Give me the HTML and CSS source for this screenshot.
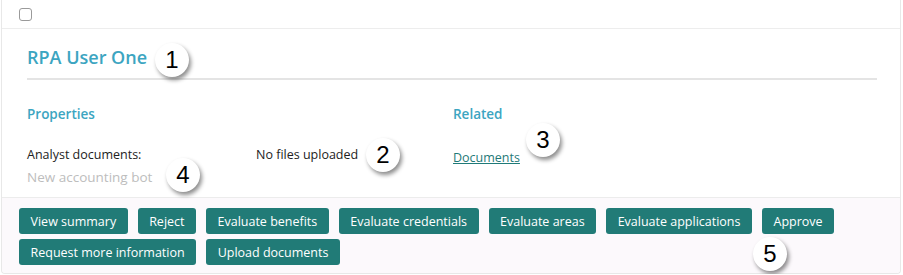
FILE: index.html
```
<!DOCTYPE html>
<html lang="en">
<head>
    <meta charset="UTF-8">
    <title>RPA User One</title>
    <link rel="stylesheet" href="styles.css">
</head>
<body>
    <div class="card">
        <div class="card-top">
            <input type="checkbox" class="check">
        </div>
        <div class="card-body">
            <h2 class="title">RPA User One</h2>
            <div class="sections">
                <div class="props">
                    <h3 class="section-title">Properties</h3>
                    <div class="prop-row">
                        <div class="prop-label">Analyst documents:</div>
                        <div class="prop-value">No files uploaded</div>
                    </div>
                    <div class="prop-sub">New accounting bot</div>
                </div>
                <div class="related">
                    <h3 class="section-title">Related</h3>
                    <a href="#" class="rel-link">Documents</a>
                </div>
            </div>
        </div>
        <div class="card-actions">
            <button class="btn">View summary</button>
            <button class="btn">Reject</button>
            <button class="btn">Evaluate benefits</button>
            <button class="btn">Evaluate credentials</button>
            <button class="btn">Evaluate areas</button>
            <button class="btn">Evaluate applications</button>
            <button class="btn">Approve</button>
            <button class="btn">Request more information</button>
            <button class="btn">Upload documents</button>
        </div>

        <span class="callout c1">1</span>
        <span class="callout c2">2</span>
        <span class="callout c3">3</span>
        <span class="callout c4">4</span>
        <span class="callout c5">5</span>
    </div>
</body>
</html>
```
FILE: styles.css
```
body {
    margin: 0;
    background: #fff;
    font-family: "Open Sans", "Liberation Sans", sans-serif;
}

.card {
    position: relative;
    width: 900px;
    height: 274px;
    margin-left: 1px;
    border: 1px solid #e8e8e8;
    border-top: none;
    border-radius: 0 0 4px 4px;
    box-sizing: border-box;
}

.card-top {
    height: 28px;
    border-bottom: 1px solid #ededed;
    padding-left: 17px;
}

.check {
    appearance: none;
    width: 13px;
    height: 13px;
    margin: 8px 0 0;
    border: 1.5px solid #9a9a9a;
    border-radius: 3px;
    background: #fff;
}

.card-body {
    padding: 0 23px 0 25px;
    height: 168px;
}

.title {
    margin: 0;
    padding: 16px 0 9px;
    font-size: 18px;
    font-weight: 600;
    color: #3ca5c1;
    border-bottom: 2px solid #e4e4e4;
    line-height: 24px;
}

.sections {
    display: flex;
    padding-top: 25px;
}

.props {
    width: 426px;
}

.section-title {
    margin: 0 0 21px;
    font-size: 13.5px;
    font-weight: 600;
    color: #3ca5c1;
    line-height: 19px;
}

.prop-row {
    display: flex;
    font-size: 12.5px;
    color: #222;
    line-height: 20px;
}

.prop-label {
    width: 229px;
}

.prop-sub {
    font-size: 13.5px;
    color: #bdbdbd;
    line-height: 25px;
}

.rel-link {
    font-size: 12.5px;
    color: #1f7a78;
    line-height: 20px;
}

.card-actions {
    display: flex;
    flex-wrap: wrap;
    gap: 5px 10px;
    padding: 10px 17px 8px;
    background: #fcf9fc;
    border-top: 1px solid #ececec;
    border-radius: 0 0 4px 4px;
}

.btn {
    height: 26px;
    padding: 0 11.5px;
    border: none;
    border-radius: 3px;
    background: #217b77;
    color: #fff;
    font-family: "Open Sans", "Liberation Sans", sans-serif;
    font-size: 12.5px;
}

.callout {
    position: absolute;
    width: 34px;
    height: 34px;
    border-radius: 50%;
    background: #fff;
    box-shadow: 2px 3px 4px rgba(0, 0, 0, 0.45);
    font-family: "Liberation Sans", Arial, sans-serif;
    font-size: 24px;
    line-height: 34px;
    text-align: center;
    color: #000;
}

.c1 { left: 153px; top: 43px; }
.c2 { left: 364px; top: 138px; }
.c3 { left: 524px; top: 123px; }
.c4 { left: 164px; top: 158px; }
.c5 { left: 751px; top: 237px; }
```
